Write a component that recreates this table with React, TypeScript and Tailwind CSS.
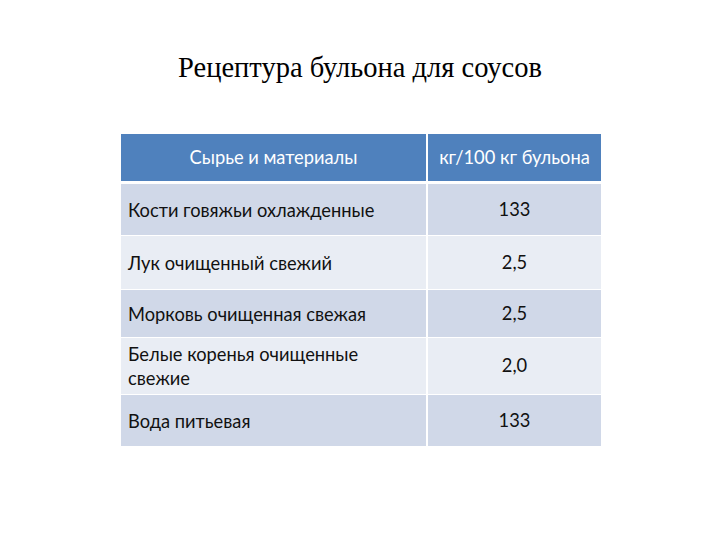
import React from 'react';

const rows = [
  { name: 'Кости говяжьи охлажденные', value: '133', h: 'h-[52px]' },
  { name: 'Лук очищенный свежий', value: '2,5', h: 'h-[54px]' },
  { name: 'Морковь очищенная свежая', value: '2,5', h: 'h-[48px]' },
  { name: 'Белые коренья очищенные свежие', value: '2,0', h: 'h-[57px]' },
  { name: 'Вода питьевая', value: '133', h: 'h-[52px]' },
];

export default function App() {
  return (
    <div className="w-[720px] h-[540px] bg-white relative">
      <h1 className="pt-[50px] text-center text-[28.5px] leading-[36px] text-black font-['Liberation_Serif',serif]">
        Рецептура бульона для соусов
      </h1>
      <div className="mt-[48px] ml-[121px] w-[480px] font-['Lato','Open_Sans',sans-serif] text-[18.3px] text-[#111]">
        <div className="flex h-[50px] bg-[#4f81bd] text-white border-b-[3px] border-white">
          <div className="w-[307px] flex items-center justify-center border-r-2 border-white">Сырье и материалы</div>
          <div className="flex-1 flex items-center justify-center">кг/100 кг бульона</div>
        </div>
        {rows.map((r, i) => (
          <div
            key={i}
            className={`flex ${r.h} border-b border-white ${i % 2 === 0 ? 'bg-[#d0d8e8]' : 'bg-[#e9edf4]'}`}
          >
            <div className="w-[307px] flex items-center px-[7px] leading-[24px] border-r-2 border-white">
              <span className="w-[260px]">{r.name}</span>
            </div>
            <div className="flex-1 flex items-center justify-center">{r.value}</div>
          </div>
        ))}
      </div>
    </div>
  );
}
